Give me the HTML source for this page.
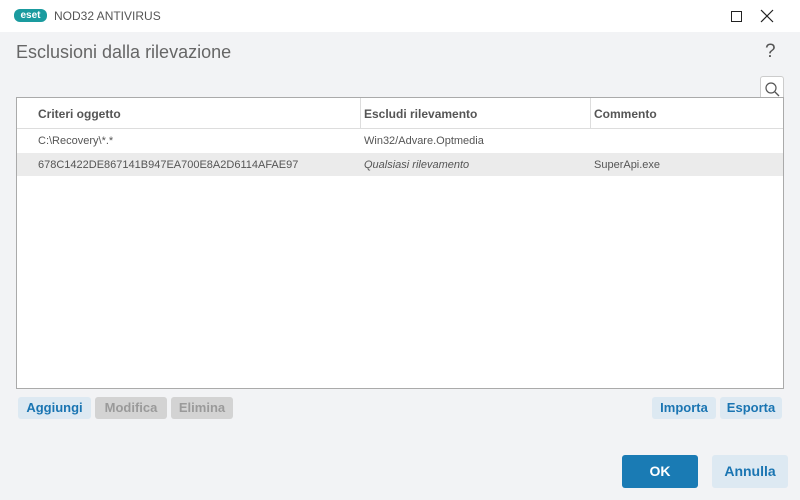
<!DOCTYPE html>
<html><head><style>
body{margin:0;width:800px;height:500px;background:#f2f3f5;font-family:"Liberation Sans",sans-serif;position:relative;overflow:hidden;font-size:12px;color:#555}
.a{position:absolute}
.title{top:0;left:0;width:800px;height:32px;background:#fff}
.btn{position:absolute;top:397px;height:22px;line-height:22px;border-radius:3px;font-weight:bold;font-size:13px;text-align:center}
.b1{background:#dde9f2;color:#1a75b2}
.b2{background:#d3d3d3;color:#9a9a9a}
.r{font-size:11px}
</style></head><body>
<div class="a title"></div>
<div class="a" style="left:14px;top:9px;width:33px;height:13px;background:#1a9b9f;border-radius:6px;color:#fff;font-size:10px;font-weight:bold;line-height:13px;text-align:center">eset</div>
<div class="a" style="left:54px;top:9px;font-size:12px;color:#555">NOD32 ANTIVIRUS</div>
<div class="a" style="left:731px;top:11px;width:9px;height:9px;border:1px solid #222"></div>
<svg class="a" style="left:760px;top:9px" width="14" height="14"><path d="M1 1L13 13M13 1L1 13" stroke="#222" stroke-width="1.2"/></svg>
<div class="a" style="left:16px;top:42px;font-size:18px;color:#666">Esclusioni dalla rilevazione</div>
<div class="a" style="left:765px;top:41px;font-size:19px;color:#555">?</div>
<div class="a" style="left:760px;top:76px;width:22px;height:24px;background:#fff;border:1px solid #ccc;border-bottom:none;border-radius:3px 3px 0 0">
<svg width="22" height="22"><circle cx="10" cy="11" r="5" fill="none" stroke="#555" stroke-width="1.2"/><line x1="14" y1="15" x2="18" y2="19" stroke="#555" stroke-width="1.3"/></svg></div>
<div class="a" style="left:16px;top:97px;width:766px;height:290px;background:#fff;border:1px solid #aaa"></div>
<div class="a" style="left:17px;top:128px;width:766px;height:1px;background:#ddd"></div>
<div class="a" style="left:360px;top:98px;width:1px;height:30px;background:#ddd"></div>
<div class="a" style="left:590px;top:98px;width:1px;height:30px;background:#ddd"></div>
<div class="a" style="left:38px;top:107px;font-weight:bold">Criteri oggetto</div>
<div class="a" style="left:364px;top:107px;font-weight:bold">Escludi rilevamento</div>
<div class="a" style="left:594px;top:107px;font-weight:bold">Commento</div>
<div class="a" style="left:17px;top:153px;width:766px;height:23px;background:#ebebeb"></div>
<div class="a r" style="left:38px;top:135px">C:\Recovery\*.*</div>
<div class="a r" style="left:364px;top:135px">Win32/Advare.Optmedia</div>
<div class="a r" style="left:38px;top:159px">678C1422DE867141B947EA700E8A2D6114AFAE97</div>
<div class="a r" style="left:364px;top:159px;font-style:italic">Qualsiasi rilevamento</div>
<div class="a r" style="left:594px;top:159px">SuperApi.exe</div>
<div class="btn b1" style="left:18px;width:73px">Aggiungi</div>
<div class="btn b2" style="left:95px;width:72px">Modifica</div>
<div class="btn b2" style="left:171px;width:62px">Elimina</div>
<div class="btn b1" style="left:652px;width:64px">Importa</div>
<div class="btn b1" style="left:720px;width:62px">Esporta</div>
<div class="a" style="left:622px;top:455px;width:76px;height:33px;line-height:33px;background:#1a7bb4;color:#fff;font-weight:bold;font-size:14px;text-align:center;border-radius:3px">OK</div>
<div class="a" style="left:712px;top:455px;width:76px;height:33px;line-height:33px;background:#dde9f2;color:#1a75b2;font-weight:bold;font-size:14px;text-align:center;border-radius:3px">Annulla</div>
</body></html>
